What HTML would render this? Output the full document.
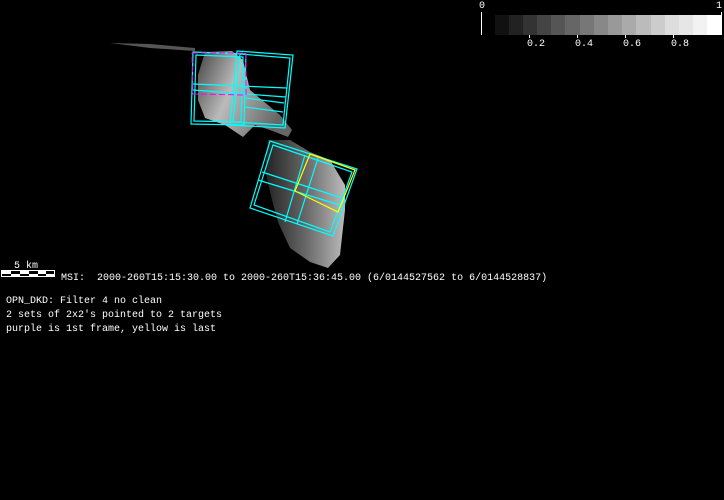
<!DOCTYPE html>
<html><head><meta charset="utf-8"><style>
html,body{margin:0;padding:0;background:#000;width:724px;height:500px;overflow:hidden}
.t{position:absolute;font-family:"Liberation Mono",monospace;font-size:10px;color:#fff;white-space:pre;line-height:10px}
</style></head><body>
<svg width="724" height="500" style="position:absolute;left:0;top:0">
<defs>
<linearGradient id="g1" x1="0" y1="0" x2="1" y2="0.4"><stop offset="0" stop-color="#444"/><stop offset="0.45" stop-color="#bbb"/><stop offset="1" stop-color="#666"/></linearGradient>
<linearGradient id="g2" x1="0" y1="0" x2="1" y2="0"><stop offset="0" stop-color="#222"/><stop offset="0.5" stop-color="#666"/><stop offset="1" stop-color="#bbb"/></linearGradient>
</defs>
<polygon points="110,43 150,44 195,48 195,51 150,48" fill="#555"/>
<polygon points="205,52 232,51 243,60 250,90 262,100 280,115 292,130 288,137 270,130 255,125 243,137 225,125 205,118 198,100 198,75" fill="url(#g1)"/>
<polygon points="268,140 290,140 310,152 330,160 345,185 345,210 340,255 328,268 310,262 290,248 278,222 272,200 265,170" fill="url(#g2)"/>
<g fill="none" stroke="#0ff" stroke-width="1.2">
<polygon points="193,52 246,54 244,125 191,124"/>
<polygon points="196,55 243,57 241,122 194,121"/>
<polygon points="237,51 293,55 285,128 230,125"/>
<polygon points="240,54 290,58 283,125 233,122"/>
<line x1="193" y1="84" x2="287" y2="88"/><line x1="193" y1="90" x2="286" y2="97"/>
<line x1="245" y1="98" x2="284" y2="103"/><line x1="245" y1="107" x2="283" y2="112"/>
<polygon points="270,141 357,169 333,236 250,208"/>
<polygon points="273,145 352,172 330,232 254,205"/>
<line x1="262" y1="172" x2="342" y2="198"/><line x1="258" y1="180" x2="340" y2="205"/>
<line x1="305" y1="155" x2="285" y2="222"/><line x1="318" y1="158" x2="297" y2="224"/>
</g>
<polygon points="192,53 246,53 246,95 193,94" fill="none" stroke="#f0f" stroke-width="1" stroke-dasharray="6,3"/>
<polygon points="310,154 355,170 338,212 295,191" fill="none" stroke="#ff0" stroke-width="1.2"/>
<g>
<rect x="495" y="15" width="15" height="20" fill="#111"/><rect x="509" y="15" width="15" height="20" fill="#222"/>
<rect x="523" y="15" width="15" height="20" fill="#333"/><rect x="537" y="15" width="15" height="20" fill="#444"/>
<rect x="551" y="15" width="15" height="20" fill="#555"/><rect x="565" y="15" width="16" height="20" fill="#666"/>
<rect x="580" y="15" width="15" height="20" fill="#777"/><rect x="594" y="15" width="15" height="20" fill="#888"/>
<rect x="608" y="15" width="15" height="20" fill="#999"/><rect x="622" y="15" width="15" height="20" fill="#aaa"/>
<rect x="636" y="15" width="16" height="20" fill="#bbb"/><rect x="651" y="15" width="15" height="20" fill="#ccc"/>
<rect x="665" y="15" width="15" height="20" fill="#ddd"/><rect x="679" y="15" width="15" height="20" fill="#e6e6e6"/>
<rect x="693" y="15" width="15" height="20" fill="#f2f2f2"/><rect x="707" y="15" width="15" height="20" fill="#fff"/>
</g>
<line x1="481.5" y1="12" x2="481.5" y2="35" stroke="#fff"/>
<line x1="721.5" y1="12" x2="721.5" y2="35" stroke="#fff"/>
<g stroke="#fff"><line x1="529.5" y1="35" x2="529.5" y2="38"/><line x1="577.5" y1="35" x2="577.5" y2="38"/><line x1="625.5" y1="35" x2="625.5" y2="38"/><line x1="673.5" y1="35" x2="673.5" y2="38"/></g>
<rect x="1.5" y="270.5" width="53" height="6" fill="#000" stroke="#fff"/>
<rect x="2" y="271" width="9" height="3" fill="#fff"/><rect x="11" y="274" width="9" height="3" fill="#fff"/>
<rect x="20" y="271" width="9" height="3" fill="#fff"/><rect x="29" y="274" width="9" height="3" fill="#fff"/>
<rect x="38" y="271" width="8" height="3" fill="#fff"/><rect x="46" y="274" width="8" height="3" fill="#fff"/>
</svg>
<div class="t" style="left:479px;top:2px">0</div>
<div class="t" style="left:716px;top:2px">1</div>
<div class="t" style="left:527px;top:40px">0.2</div>
<div class="t" style="left:575px;top:40px">0.4</div>
<div class="t" style="left:623px;top:40px">0.6</div>
<div class="t" style="left:671px;top:40px">0.8</div>
<div class="t" style="left:14px;top:262px">5 km</div>
<div class="t" style="left:61px;top:274px">MSI:  2000-260T15:15:30.00 to 2000-260T15:36:45.00 (6/0144527562 to 6/0144528837)</div>
<div class="t" style="left:6px;top:297px">OPN_DKD: Filter 4 no clean</div>
<div class="t" style="left:6px;top:311px">2 sets of 2x2's pointed to 2 targets</div>
<div class="t" style="left:6px;top:325px">purple is 1st frame, yellow is last</div>
</body></html>
